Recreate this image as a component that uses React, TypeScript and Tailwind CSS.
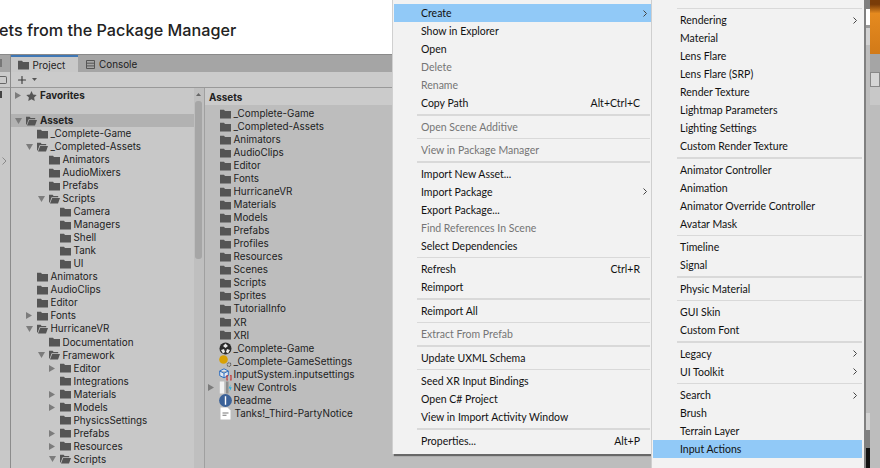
import { Plus } from 'lucide-react';

type Entry = { label: string; shortcut?: string; disabled?: boolean; arrow?: boolean; active?: boolean } | 'sep';

const MAIN_MENU: Entry[] = [
  { label: 'Create', arrow: true, active: true },
  { label: 'Show in Explorer' },
  { label: 'Open' },
  { label: 'Delete', disabled: true },
  { label: 'Rename', disabled: true },
  { label: 'Copy Path', shortcut: 'Alt+Ctrl+C' },
  'sep',
  { label: 'Open Scene Additive', disabled: true },
  'sep',
  { label: 'View in Package Manager', disabled: true },
  'sep',
  { label: 'Import New Asset...' },
  { label: 'Import Package', arrow: true },
  { label: 'Export Package...' },
  { label: 'Find References In Scene', disabled: true },
  { label: 'Select Dependencies' },
  'sep',
  { label: 'Refresh', shortcut: 'Ctrl+R' },
  { label: 'Reimport' },
  'sep',
  { label: 'Reimport All' },
  'sep',
  { label: 'Extract From Prefab', disabled: true },
  'sep',
  { label: 'Update UXML Schema' },
  'sep',
  { label: 'Seed XR Input Bindings' },
  { label: 'Open C# Project' },
  { label: 'View in Import Activity Window' },
  'sep',
  { label: 'Properties...', shortcut: 'Alt+P' },
];

const CREATE_MENU: Entry[] = [
  'sep',
  { label: 'Rendering', arrow: true },
  { label: 'Material' },
  { label: 'Lens Flare' },
  { label: 'Lens Flare (SRP)' },
  { label: 'Render Texture' },
  { label: 'Lightmap Parameters' },
  { label: 'Lighting Settings' },
  { label: 'Custom Render Texture' },
  'sep',
  { label: 'Animator Controller' },
  { label: 'Animation' },
  { label: 'Animator Override Controller' },
  { label: 'Avatar Mask' },
  'sep',
  { label: 'Timeline' },
  { label: 'Signal' },
  'sep',
  { label: 'Physic Material' },
  'sep',
  { label: 'GUI Skin' },
  { label: 'Custom Font' },
  'sep',
  { label: 'Legacy', arrow: true },
  { label: 'UI Toolkit', arrow: true },
  'sep',
  { label: 'Search', arrow: true },
  { label: 'Brush' },
  { label: 'Terrain Layer' },
  { label: 'Input Actions', active: true },
];

type TreeRow = { name: string; depth: 1 | 2 | 3; state?: 'open' | 'closed' };

const TREE: TreeRow[] = [
  { name: '_Complete-Game', depth: 1 },
  { name: '_Completed-Assets', depth: 1, state: 'open' },
  { name: 'Animators', depth: 2 },
  { name: 'AudioMixers', depth: 2 },
  { name: 'Prefabs', depth: 2 },
  { name: 'Scripts', depth: 2, state: 'open' },
  { name: 'Camera', depth: 3 },
  { name: 'Managers', depth: 3 },
  { name: 'Shell', depth: 3 },
  { name: 'Tank', depth: 3 },
  { name: 'UI', depth: 3 },
  { name: 'Animators', depth: 1 },
  { name: 'AudioClips', depth: 1 },
  { name: 'Editor', depth: 1 },
  { name: 'Fonts', depth: 1, state: 'closed' },
  { name: 'HurricaneVR', depth: 1, state: 'open' },
  { name: 'Documentation', depth: 2 },
  { name: 'Framework', depth: 2, state: 'open' },
  { name: 'Editor', depth: 3, state: 'closed' },
  { name: 'Integrations', depth: 3 },
  { name: 'Materials', depth: 3, state: 'closed' },
  { name: 'Models', depth: 3, state: 'closed' },
  { name: 'PhysicsSettings', depth: 3 },
  { name: 'Prefabs', depth: 3, state: 'closed' },
  { name: 'Resources', depth: 3, state: 'closed' },
  { name: 'Scripts', depth: 3, state: 'open' },
];

const DEPTH_PADDING = { 1: 'pl-[15px]', 2: 'pl-[27px]', 3: 'pl-[38px]' };

const ASSET_FOLDERS = [
  '_Complete-Game',
  '_Completed-Assets',
  'Animators',
  'AudioClips',
  'Editor',
  'Fonts',
  'HurricaneVR',
  'Materials',
  'Models',
  'Prefabs',
  'Profiles',
  'Resources',
  'Scenes',
  'Scripts',
  'Sprites',
  'TutorialInfo',
  'XR',
  'XRI',
];

function FolderIcon() {
  return (
    <svg width="11" height="10" viewBox="0 0 11 10" className="shrink-0">
      <path d="M0 .8h4l1 1.2h6v7.6H0z" fill="#555" />
    </svg>
  );
}

function OpenFolderIcon() {
  return (
    <svg width="11" height="10" viewBox="0 0 11 10" className="shrink-0">
      <path d="M0 .8h3.600l1 1.200h4.600v1.200H2.600L.7 8.500H0z" fill="#555" />
      <path d="M3.200 4h7.800L9 9.400H1z" fill="#555" />
    </svg>
  );
}

function Arrow({ state }: { state?: 'open' | 'closed' }) {
  return (
    <span className="flex w-[11px] shrink-0 items-center">
      {state === 'open' ? (
        <svg width="7" height="6" viewBox="0 0 7 6">
          <path d="M0 0h7L3.500 6z" fill="#7c7c7c" />
        </svg>
      ) : state === 'closed' ? (
        <svg width="6" height="7" viewBox="0 0 6 7">
          <path d="M0 0l6 3.500L0 7z" fill="#7c7c7c" />
        </svg>
      ) : null}
    </span>
  );
}

function SceneIcon() {
  return (
    <svg width="13" height="13" viewBox="0 0 13 13" className="shrink-0">
      <circle cx="6.5" cy="6.5" r="6" fill="#2b2b2b" />
      <path d="M6.500 1.500 9 4 6.500 6 4 4zM2 8l3-1 1 3-2 1.500zM11 8 8 7l-1 3 2 1.500z" fill="#e8e8e8" />
    </svg>
  );
}

function SettingsIcon() {
  return (
    <svg width="13" height="13" viewBox="0 0 13 13" className="shrink-0">
      <circle cx="4.5" cy="4.5" r="4.3" fill="#d8a106" />
      <circle cx="10" cy="9.6" r="1.8" fill="none" stroke="#666" strokeWidth="1.2" strokeDasharray="1.2 .5" />
    </svg>
  );
}

function InputSettingsIcon() {
  return (
    <svg width="13" height="13" viewBox="0 0 13 13" className="shrink-0">
      <path d="M5 .8 9.300 3v4.600L5 9.800.7 7.600V3zM.7 3 5 5.200 9.300 3M5 5.200v4.600" fill="#dfe7f2" stroke="#2f6fc0" strokeWidth="1" />
      <path d="M8.800 7.500H8V12h.8M11.200 7.500h.8V12h-.8" fill="none" stroke="#c42b2b" strokeWidth="1.1" />
    </svg>
  );
}

function ControlsIcon() {
  return (
    <svg width="13" height="13" viewBox="0 0 13 13" className="shrink-0">
      <path d="M.8.500h4.400v12H.8z" fill="#f2f2f2" />
      <path d="M7 .500h2.500v12H7z" fill="#8d8d8d" />
      <path d="M11.600 3.500 9.600 7.500h1.600L10.400 11l2.400-4.800h-1.600z" fill="#22aee0" />
    </svg>
  );
}

function ReadmeIcon() {
  return (
    <svg width="13" height="13" viewBox="0 0 13 13" className="shrink-0">
      <circle cx="6.5" cy="6.5" r="6.4" fill="#3b6299" />
      <path d="M5.800 2.200h1.400v8.600H5.800z" fill="#fff" />
    </svg>
  );
}

function DocIcon() {
  return (
    <svg width="11" height="13" viewBox="0 0 11 13" className="mr-[2px] shrink-0">
      <path d="M.5.500h7l3 3v9H.5z" fill="#fff" />
      <path d="M2.500 5.500h6v1h-6zM2.500 7.800h4v1h-4z" fill="#777" />
    </svg>
  );
}

function Menu({ items, wide, className }: { items: Entry[]; wide?: boolean; className: string }) {
  return (
    <div className={`absolute bg-[#f2f2f2] font-['Lato',sans-serif] text-[10.5px] leading-[18px] text-[#111] ${className}`}>
      {items.map((item, i) =>
        item === 'sep' ? (
          <div key={i} className={`flex h-[5.5px] items-center ${wide ? 'pl-[24px]' : 'pr-[2px] pl-[23px]'}`}>
            <div className="h-[1.5px] w-full bg-[#d9d9d9]" />
          </div>
        ) : (
          <div
            key={i}
            className={`flex h-[18px] items-center justify-between pr-[5px] pl-[27px] ${item.active ? 'bg-[#91c9f7]' : ''} ${
              item.disabled ? 'text-[#757575]' : ''
            }`}
          >
            <span>{item.label}</span>
            {item.shortcut ? <span className="pr-[7px]">{item.shortcut}</span> : null}
            {item.arrow ? (
              <svg width="4" height="7" viewBox="0 0 4 7">
                <path d="M.5.500l3 3-3 3" fill="none" stroke="#444" strokeWidth="1" />
              </svg>
            ) : null}
          </div>
        ),
      )}
    </div>
  );
}

export default function App() {
  return (
    <div className="relative flex h-[468px] w-[880px] overflow-hidden bg-[#bdbdbd] font-['Inter',sans-serif] text-[9.9px] leading-[13px] text-[#222]">
      <div className="flex w-[866px] shrink-0 flex-col">
        <div className="flex h-[54px] shrink-0 items-start bg-white pt-[19px] text-[16.2px] leading-[22px] font-medium text-[#222]">
          <span className="-ml-[1px]">ets from the Package Manager</span>
        </div>

        <div className="flex min-h-0 flex-1 border-t border-[#8a8a8a]">
          {/* hierarchy edge */}
          <div className="flex w-[11px] shrink-0 flex-col border-r border-[#8c8c8c] bg-[#c8c8c8]">
            <div className="h-[17px] bg-[#a5a5a5] pt-[4px]">
              <div className="h-[8px] w-[2px] bg-[#777]" />
            </div>
            <div className="flex h-[16px] items-center border-b border-[#999] bg-[#cbcbcb]">
              <div className="h-[8px] w-[7px] rounded-r-[2px] border border-l-0 border-[#666]" />
            </div>
            <div className="pt-[3px]">
              <div className="h-[7px] w-[2px] bg-[#444]" />
            </div>
            <svg width="5" height="8" viewBox="0 0 5 8" className="mt-[59px] ml-[2px]">
              <path d="M.5.500l3.500 3.500L.5 7.500" fill="none" stroke="#8a8a8a" strokeWidth="1" />
            </svg>
          </div>

          <div className="flex min-w-0 flex-1 flex-col">
            {/* tabs */}
            <div className="flex h-[17px] shrink-0 items-end gap-[6px] bg-[#a5a5a5]">
              <div className="flex h-[17px] w-[67px] items-center gap-[3.5px] border-t-2 border-[#3f77b5] bg-[#c8c8c8] pt-px pl-[7px]">
                <FolderIcon />
                <span>Project</span>
              </div>
              <div className="flex h-[17px] items-center gap-[4px] pt-[2px] pl-[2px]">
                <svg width="9" height="9" viewBox="0 0 9 9">
                  <path d="M.5.500h8v8h-8zM.5 3.200h8M.5 5.900h8" fill="none" stroke="#555" strokeWidth="1" />
                </svg>
                <span>Console</span>
              </div>
            </div>

            {/* toolbar */}
            <div className="flex h-[16px] shrink-0 items-center gap-[4px] border-b border-[#999] bg-[#cbcbcb] pl-[5px]">
              <Plus size={12} strokeWidth={2.2} color="#3a3a3a" />
              <svg width="5" height="3" viewBox="0 0 5 3">
                <path d="M0 0h5L2.500 3z" fill="#555" />
              </svg>
            </div>

            <div className="flex min-h-0 flex-1">
              {/* folder tree */}
              <div className="w-[183px] shrink-0 overflow-hidden bg-[#c8c8c8] pt-px">
                <div className="mb-[12px] flex h-[13px] items-center pl-[4px] font-bold">
                  <Arrow state="closed" />
                  <svg width="11" height="10" viewBox="0 0 24 23" className="shrink-0">
                    <path d="M12 0l3.700 8 8.300 1-6 5.700L19.400 23 12 18.800 4.600 23 6 14.700 0 9l8.300-1z" fill="#555" />
                  </svg>
                  <span className="ml-[3px]">Favorites</span>
                </div>
                <div className="flex h-[13px] items-center bg-[#b2b2b2] pl-[4px] font-bold">
                  <Arrow state="open" />
                  <OpenFolderIcon />
                  <span className="ml-[3px]">Assets</span>
                </div>
                {TREE.map((row, i) => (
                  <div key={i} className={`flex h-[13.04px] items-center ${DEPTH_PADDING[row.depth]}`}>
                    <Arrow state={row.state} />
                    {row.state === 'open' ? <OpenFolderIcon /> : <FolderIcon />}
                    <span className="ml-[2.5px]">{row.name}</span>
                  </div>
                ))}
              </div>

              {/* scrollbar */}
              <div className="flex w-[11px] shrink-0 flex-col items-center border-r border-[#a0a0a0] bg-[#bfbfbf] pr-px">
                <svg width="5" height="3" viewBox="0 0 5 3" className="mt-[5px]">
                  <path d="M2.500 0 5 3H0z" fill="#666" />
                </svg>
                <div className="mt-[5px] h-[158px] w-[7px] rounded-[3px] bg-[#a6a6a6]" />
              </div>

              {/* asset list */}
              <div className="flex min-w-0 flex-1 flex-col">
                <div className="flex h-[17px] shrink-0 items-center bg-[#cbcbcb] pt-px pl-[4px] font-bold">Assets</div>
                <div className="flex-1 bg-[#bdbdbd] pt-[2px] pl-[3px]">
                  {ASSET_FOLDERS.map((name, i) => (
                    <div key={i} className="flex h-[13.04px] items-center">
                      <span className="w-[12px] shrink-0" />
                      <FolderIcon />
                      <span className="ml-[2.5px]">{name}</span>
                    </div>
                  ))}
                  <div className="flex h-[13.04px] items-center pl-[11px]">
                    <SceneIcon />
                    <span className="ml-[1.5px]">_Complete-Game</span>
                  </div>
                  <div className="flex h-[13.04px] items-center pl-[11px]">
                    <SettingsIcon />
                    <span className="ml-[1.5px]">_Complete-GameSettings</span>
                  </div>
                  <div className="flex h-[13.04px] items-center pl-[11px]">
                    <InputSettingsIcon />
                    <span className="ml-[1.5px]">InputSystem.inputsettings</span>
                  </div>
                  <div className="flex h-[13.04px] items-center">
                    <Arrow state="closed" />
                    <ControlsIcon />
                    <span className="ml-[1.5px]">New Controls</span>
                  </div>
                  <div className="flex h-[13.04px] items-center pl-[11px]">
                    <ReadmeIcon />
                    <span className="ml-[1.5px]">Readme</span>
                  </div>
                  <div className="flex h-[13.04px] items-center pl-[12px]">
                    <DocIcon />
                    <span className="ml-[1.5px]">Tanks!_Third-PartyNotice</span>
                  </div>
                </div>
              </div>
            </div>
          </div>
        </div>
      </div>

      {/* next panel, seen past the menus */}
      <div className="flex w-[14px] shrink-0">
        <div className="flex w-[4px] shrink-0 flex-col">
          <div className="h-[9px] bg-[#808080]" />
          <div className="h-[16px] bg-white" />
          <div className="h-[3px] bg-[#999]" />
          <div className="h-[17px] bg-[#d2d2d2]" />
          <div className="h-[368px] bg-[#bdbdbd]" />
          <div className="h-[17px] bg-[#d2d2d2]" />
          <div className="h-[18px] bg-[#808080]" />
          <div className="flex-1 bg-[#111]" />
        </div>
        <div className="flex w-[10px] shrink-0 flex-col">
          <div className="h-[54px] bg-gradient-to-b from-[#7a3c08] from-[8%] via-[#e58a1f] via-[25%] to-[#d27a18]" />
          <div className="h-[18px] bg-[#a5a5a5]" />
          <div className="h-[15px] border border-[#888] bg-[#d6d6d6]" />
          <div className="h-[18px] bg-[#c8c8c8]" />
          <div className="flex-1 bg-[#bdbdbd]" />
        </div>
      </div>

      <div className="absolute top-0 bottom-[14px] left-[392px] w-[260px] shadow-[2px_2px_1px_rgba(0,0,0,0.45)]">
        <Menu items={MAIN_MENU} className="inset-0 border-l border-[#d0d0d0] pt-[4px] pl-[1px]" />
      </div>
      <Menu
        items={CREATE_MENU}
        wide
        className="top-0 bottom-0 left-[651px] w-[215px] border-l border-r-2 border-[#cfcfcf] border-r-[#808080] pt-[5.5px] pr-[2px] pl-[1px]"
      />
    </div>
  );
}
